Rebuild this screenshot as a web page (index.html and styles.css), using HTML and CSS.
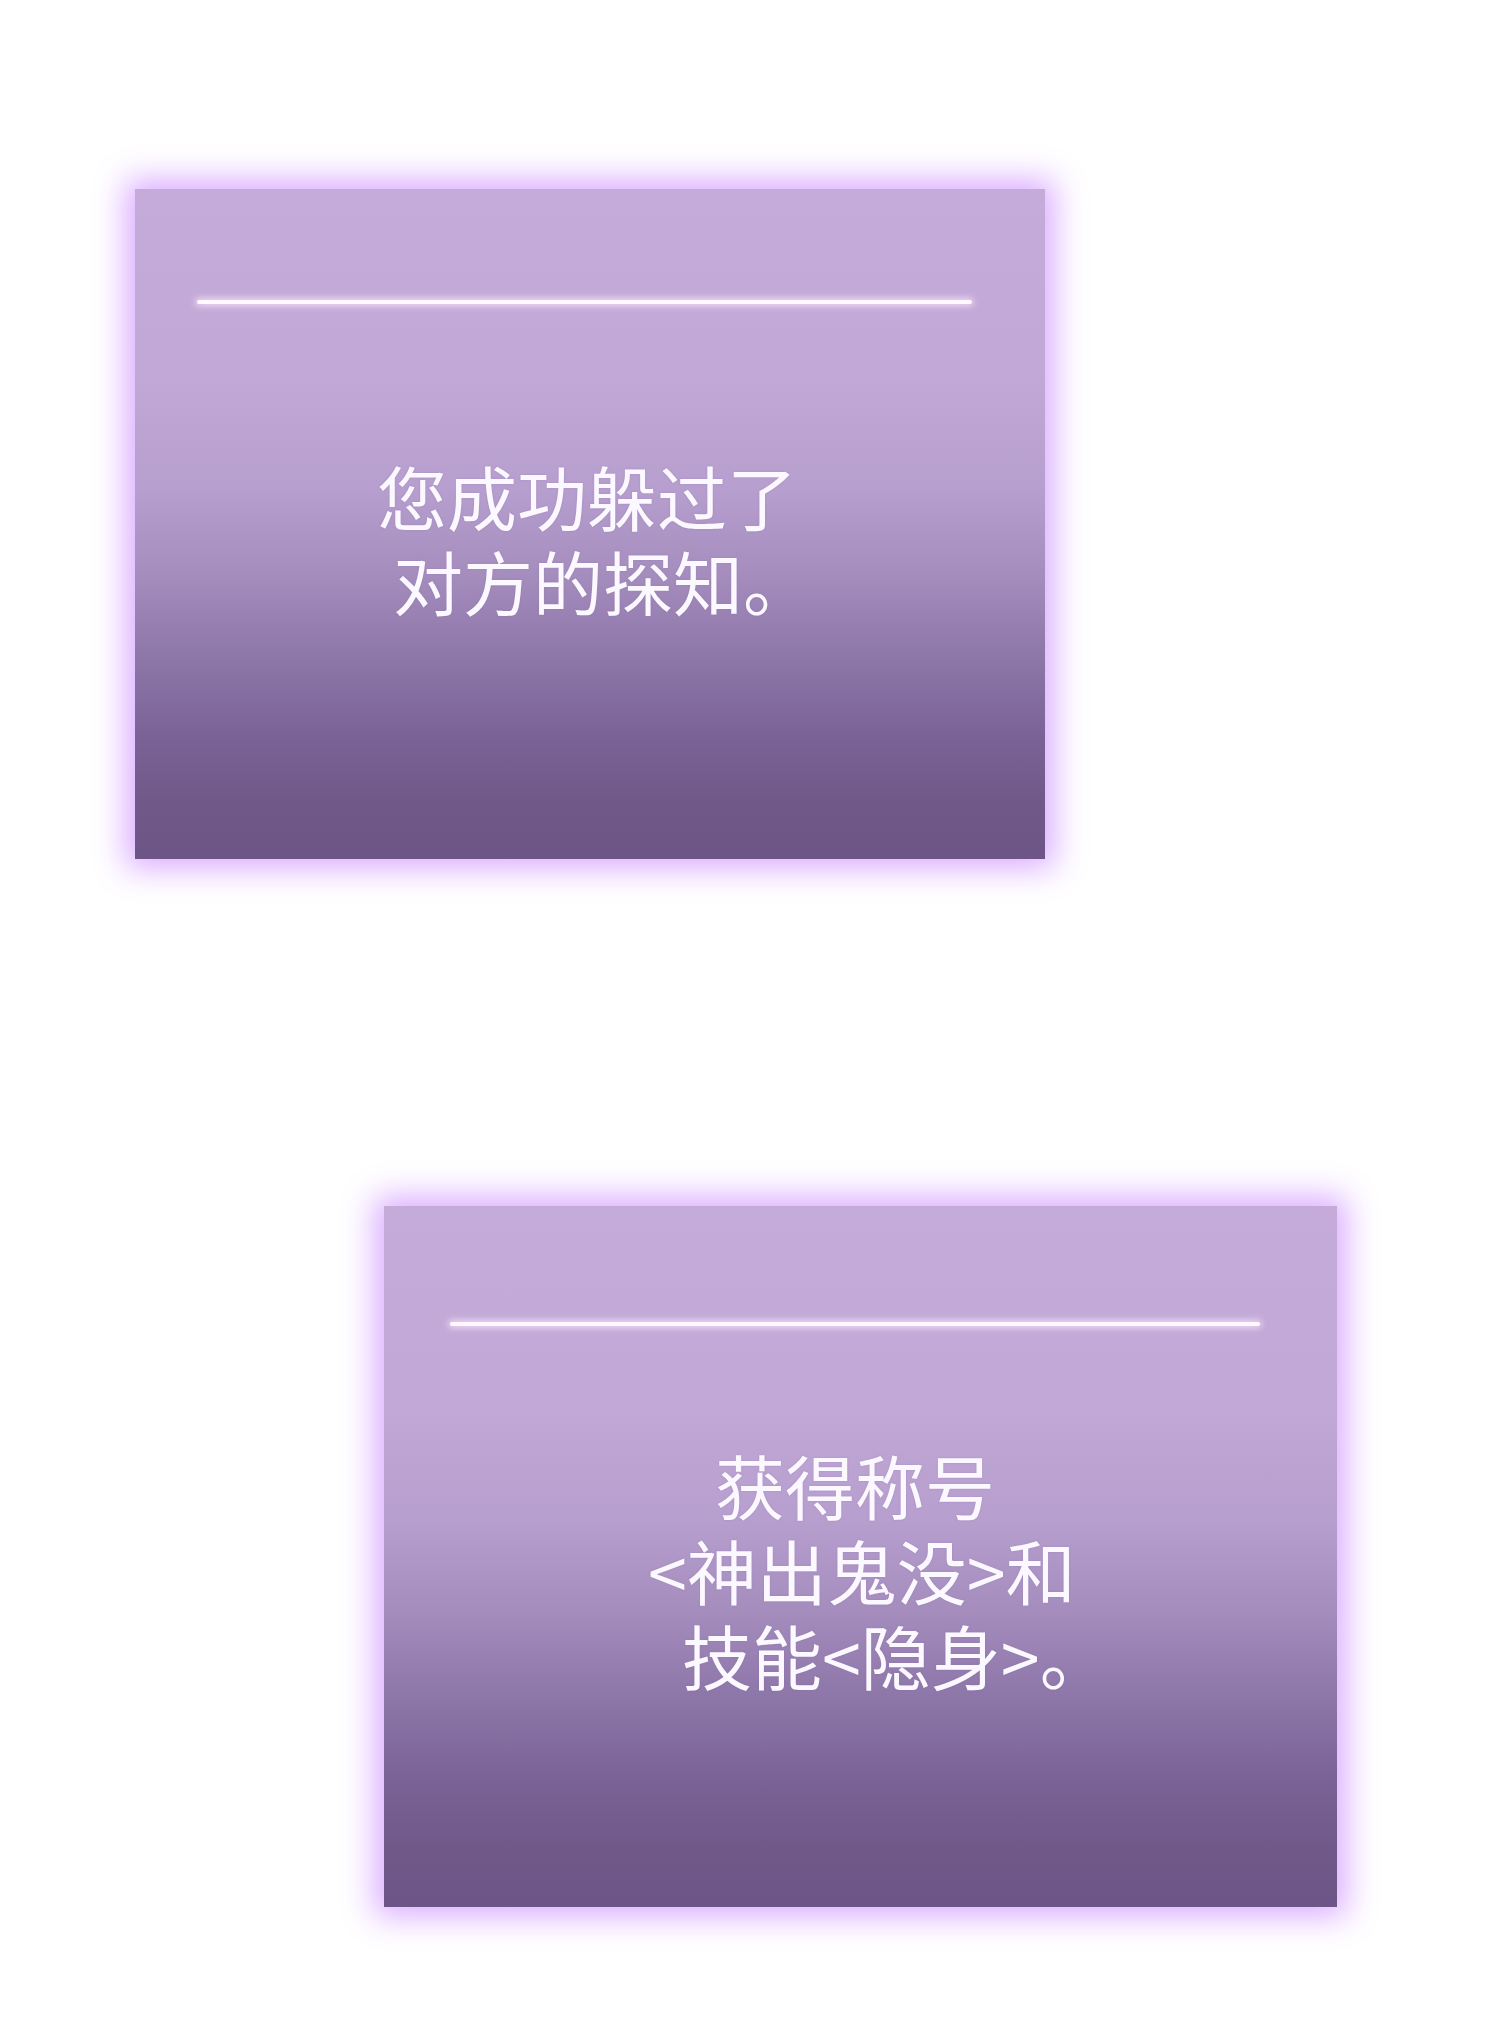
FILE: index.html
```html
<!DOCTYPE html>
<html lang="zh">
<head>
<meta charset="utf-8">
<title>提示</title>
<link rel="stylesheet" href="styles.css">
</head>
<body>
<main class="page">
  <section class="card card-one">
    <div class="rule"></div>
    <div class="msg">
      <p class="ln">您成功躲过了</p>
      <p class="ln ind-a">对方的探知。</p>
    </div>
  </section>
  <section class="card card-two">
    <div class="rule"></div>
    <div class="msg">
      <p class="ln ind-b">获得称号</p>
      <p class="ln">&lt;神出鬼没&gt;和</p>
      <p class="ln ind-c">技能&lt;隐身&gt;。</p>
    </div>
  </section>
</main>
</body>
</html>
```
FILE: styles.css
```css
html, body {
  margin: 0;
  padding: 0;
  background: #ffffff;
}
.page {
  width: 1500px;
  height: 2039px;
  padding-top: 189px;
  box-sizing: border-box;
  display: flex;
  flex-direction: column;
  gap: 347px;
}
.card {
  box-sizing: border-box;
  background: linear-gradient(180deg,
    #c4abd9 0%,
    #c1a8d6 28%,
    #b69ece 45%,
    #a48dbd 58%,
    #8d76a8 70%,
    #7a6296 82%,
    #705889 92%,
    #6d5587 100%);
  box-shadow: 0 0 30px 9px rgba(216, 166, 255, 0.95);
  display: flex;
  flex-direction: column;
  font-family: "Noto Sans CJK SC", "Noto Sans", sans-serif;
  color: #fcf8ff;
}
.card-one {
  margin-left: 135px;
  width: 910px;
  height: 670px;
  padding: 111px 0 0 62px;
}
.card-two {
  margin-left: 384px;
  width: 953px;
  height: 701px;
  padding: 116px 0 0 66px;
}
.rule {
  height: 4px;
  border-radius: 2px;
  background: #fff8ff;
  box-shadow: 0 0 7px 2px rgba(255, 235, 255, 0.75);
}
.card-one .rule { width: 775px; }
.card-two .rule { width: 810px; }
.msg {
  font-size: 70px;
  line-height: 85px;
  font-weight: 400;
  text-shadow: 0 0 2px rgba(120, 90, 150, 0.25);
}
.card-one .msg { margin: 149px 0 0 180px; }
.card-two .msg { margin: 116px 0 0 198px; }
.ln {
  margin: 0;
  height: 85px;
  white-space: nowrap;
}
.ind-a { padding-left: 16px; }
.ind-b { padding-left: 67px; }
.ind-c { padding-left: 34px; }
```
